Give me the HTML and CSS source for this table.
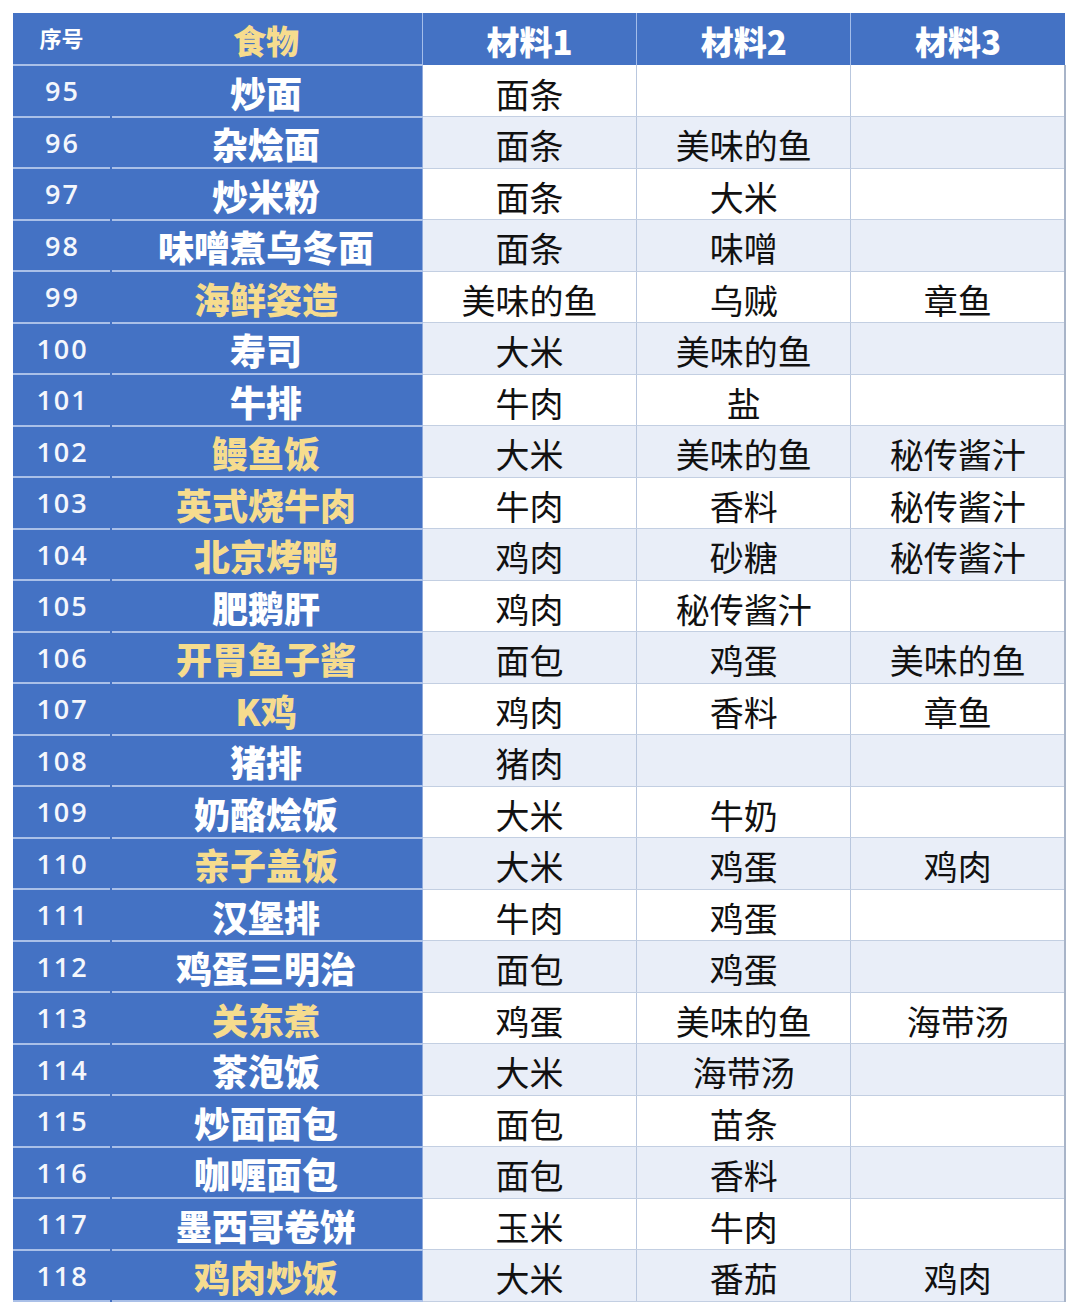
FILE: index.html
```html
<!DOCTYPE html>
<html lang="zh">
<head>
<meta charset="utf-8">
<link rel="stylesheet" href="styles.css">
</head>
<body>
<table class="menu">
<colgroup>
<col class="c-no"><col class="c-food"><col class="c-ing"><col class="c-ing"><col class="c-ing">
</colgroup>
<thead>
<tr><th class="no">序号</th><th class="food gold">食物</th><th class="ing">材料1</th><th class="ing">材料2</th><th class="ing">材料3</th></tr>
</thead>
<tbody>
<tr><td class="no">95</td><td class="food">炒面</td><td>面条</td><td></td><td></td></tr>
<tr><td class="no">96</td><td class="food">杂烩面</td><td>面条</td><td>美味的鱼</td><td></td></tr>
<tr><td class="no">97</td><td class="food">炒米粉</td><td>面条</td><td>大米</td><td></td></tr>
<tr><td class="no">98</td><td class="food">味噌煮乌冬面</td><td>面条</td><td>味噌</td><td></td></tr>
<tr><td class="no">99</td><td class="food gold">海鲜姿造</td><td>美味的鱼</td><td>乌贼</td><td>章鱼</td></tr>
<tr><td class="no">100</td><td class="food">寿司</td><td>大米</td><td>美味的鱼</td><td></td></tr>
<tr><td class="no">101</td><td class="food">牛排</td><td>牛肉</td><td>盐</td><td></td></tr>
<tr><td class="no">102</td><td class="food gold">鳗鱼饭</td><td>大米</td><td>美味的鱼</td><td>秘传酱汁</td></tr>
<tr><td class="no">103</td><td class="food gold">英式烧牛肉</td><td>牛肉</td><td>香料</td><td>秘传酱汁</td></tr>
<tr><td class="no">104</td><td class="food gold">北京烤鸭</td><td>鸡肉</td><td>砂糖</td><td>秘传酱汁</td></tr>
<tr><td class="no">105</td><td class="food">肥鹅肝</td><td>鸡肉</td><td>秘传酱汁</td><td></td></tr>
<tr><td class="no">106</td><td class="food gold">开胃鱼子酱</td><td>面包</td><td>鸡蛋</td><td>美味的鱼</td></tr>
<tr><td class="no">107</td><td class="food gold">K鸡</td><td>鸡肉</td><td>香料</td><td>章鱼</td></tr>
<tr><td class="no">108</td><td class="food">猪排</td><td>猪肉</td><td></td><td></td></tr>
<tr><td class="no">109</td><td class="food">奶酪烩饭</td><td>大米</td><td>牛奶</td><td></td></tr>
<tr><td class="no">110</td><td class="food gold">亲子盖饭</td><td>大米</td><td>鸡蛋</td><td>鸡肉</td></tr>
<tr><td class="no">111</td><td class="food">汉堡排</td><td>牛肉</td><td>鸡蛋</td><td></td></tr>
<tr><td class="no">112</td><td class="food">鸡蛋三明治</td><td>面包</td><td>鸡蛋</td><td></td></tr>
<tr><td class="no">113</td><td class="food gold">关东煮</td><td>鸡蛋</td><td>美味的鱼</td><td>海带汤</td></tr>
<tr><td class="no">114</td><td class="food">茶泡饭</td><td>大米</td><td>海带汤</td><td></td></tr>
<tr><td class="no">115</td><td class="food">炒面面包</td><td>面包</td><td>苗条</td><td></td></tr>
<tr><td class="no">116</td><td class="food">咖喱面包</td><td>面包</td><td>香料</td><td></td></tr>
<tr><td class="no">117</td><td class="food">墨西哥卷饼</td><td>玉米</td><td>牛肉</td><td></td></tr>
<tr><td class="no">118</td><td class="food gold">鸡肉炒饭</td><td>大米</td><td>番茄</td><td>鸡肉</td></tr>
</tbody>
</table>
</body>
</html>
```
FILE: styles.css
```css
html, body {
  background: #ffffff;
}
body {
  margin: 0;
  padding: 13px 0 0 13px;
}
.menu {
  border-collapse: collapse;
  table-layout: fixed;
  width: 1053px;
  font-family: "Noto Sans CJK SC", sans-serif;
}
.c-no { width: 97px; }
.c-food { width: 312px; }
.c-ing { width: 214px; }
.menu th, .menu td {
  padding: 0;
  text-align: center;
  vertical-align: middle;
  overflow: hidden;
  white-space: nowrap;
}
.menu thead tr {
  height: 52px;
}
.menu tbody tr {
  height: 51.5px;
}
.menu th {
  background: #4472c4;
  color: #ffffff;
  font-weight: 900;
  font-size: 33px;
  line-height: 1;
  border-right: 1px solid #a4bdea;
  padding-top: 4px;
}
.menu th.no {
  font-size: 22px;
  font-weight: 700;
  padding-top: 0;
  padding-bottom: 4px;
  border-right: none;
  border-bottom: 2px solid #aac0e8;
}
.menu th.food {
  font-size: 33px;
  border-bottom: 2px solid #aac0e8;
}
.menu td {
  font-size: 34px;
  line-height: 1;
  color: #111111;
  border-right: 1px solid #b9c7de;
  border-bottom: 1px solid #c3cfe2;
  padding-top: 6px;
}
.menu tbody tr:nth-child(even) td {
  background: #e9eef8;
}
.menu tbody tr td.no {
  background: #4472c4;
  color: #f4f7fc;
  font-family: "Open Sans", "Noto Sans", sans-serif;
  font-size: 27px;
  font-weight: 600;
  letter-spacing: 2px;
  border-right: none;
  border-bottom: 2px solid #aac0e8;
  padding-top: 0;
  padding-left: 2px;
}
.menu tbody tr td.food {
  position: relative;
  overflow: visible;
  background: #4472c4;
  color: #ffffff;
  font-size: 36px;
  font-weight: 900;
  border-right: 1px solid #8faadc;
  border-bottom: 2px solid #aac0e8;
  padding-top: 2px;
}
.menu tbody tr td.food::after {
  content: "";
  position: absolute;
  left: 0;
  bottom: -2px;
  width: 2px;
  height: 2px;
  background: #4472c4;
}
.menu tbody tr td.food.gold,
.menu thead tr th.gold {
  color: #f6dc8e;
}
.menu tbody tr td:last-child {
  border-right: 2px solid #a8b4c8;
}
.menu thead tr th:last-child {
  border-right: none;
}
```
